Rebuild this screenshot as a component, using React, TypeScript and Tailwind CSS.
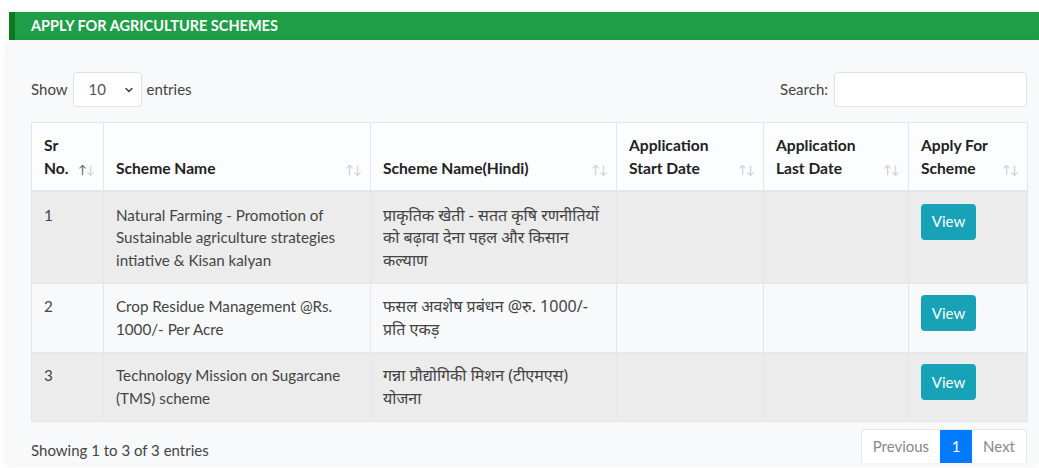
import React from "react";

const rows = [
  {
    sr: "1",
    name: "Natural Farming - Promotion of Sustainable agriculture strategies intiative & Kisan kalyan",
    hindi: "प्राकृतिक खेती - सतत कृषि रणनीतियों को बढ़ावा देना पहल और किसान कल्याण",
  },
  {
    sr: "2",
    name: "Crop Residue Management @Rs. 1000/- Per Acre",
    hindi: "फसल अवशेष प्रबंधन @रु. 1000/- प्रति एकड़",
  },
  {
    sr: "3",
    name: "Technology Mission on Sugarcane (TMS) scheme",
    hindi: "गन्ना प्रौद्योगिकी मिशन (टीएमएस) योजना",
  },
];

const SortIcon = ({ active }: { active?: boolean }) => (
  <span className="absolute right-[9px] bottom-[14px] flex text-[12px] leading-none tracking-[-1px] font-normal">
    <span className={active ? "text-[#555]" : "text-[#ccc]"}>↑</span>
    <span className="text-[#ccc]">↓</span>
  </span>
);

const headers = [
  { label: "Sr No.", w: "w-[72px]", active: true },
  { label: "Scheme Name", w: "w-[267px]" },
  { label: "Scheme Name(Hindi)", w: "w-[246px]" },
  { label: "Application Start Date", w: "w-[147px]" },
  { label: "Application Last Date", w: "w-[145px]" },
  { label: "Apply For Scheme", w: "w-[119px]" },
];

export default function App() {
  return (
    <div className="min-h-[468px] overflow-hidden bg-white pt-3 pl-[9px] font-['Lato','Liberation_Sans',sans-serif] text-[15px] text-[#212529]">
      <div className="flex h-[28px] items-center border-l-[6px] border-[#0b7a1f] bg-[#1e9e47] pl-[16px] text-[14.5px] font-bold text-white">
        APPLY FOR AGRICULTURE SCHEMES
      </div>

      <div className="h-[423px] overflow-hidden bg-[#f8f9fa] pl-[22px] pr-[12px] pt-[32px] shadow-[-3px_2px_8px_rgba(0,0,0,0.06)]">
        <div className="flex items-center justify-between">
          <div className="flex items-center gap-[5px] text-[#444]">
            <span>Show</span>
            <div className="flex h-[35px] w-[69px] items-center justify-between rounded-[4px] border border-[#dfe3e7] bg-white pl-[15px] pr-[7px] text-[#555]">
              <span>10</span>
              <svg width="10" height="10" viewBox="0 0 10 10" fill="none">
                <path d="M2 3.5L5 6.5L8 3.5" stroke="#444" strokeWidth="1.5" strokeLinecap="round" strokeLinejoin="round" />
              </svg>
            </div>
            <span>entries</span>
          </div>
          <div className="flex items-center gap-[6px] text-[#444]">
            <span>Search:</span>
            <div className="h-[35px] w-[193px] rounded-[4px] border border-[#dfe3e7] bg-white" />
          </div>
        </div>

        <table className="mt-[15px] w-[996px] table-fixed border-collapse">
          <thead>
            <tr className="bg-[#fcfdfe]">
              {headers.map((h) => (
                <th
                  key={h.label}
                  className={`${h.w} relative border border-b-2 border-[#e4e7ea] px-[12px] py-[11px] text-left align-bottom text-[15.6px] font-bold leading-[22.5px] text-[#222]`}
                >
                  <span className="block pr-[14px]">{h.label}</span>
                  <SortIcon active={h.active} />
                </th>
              ))}
            </tr>
          </thead>
          <tbody>
            {rows.map((r, i) => (
              <tr key={r.sr} className={i % 2 === 0 ? "bg-[#ececed]" : "bg-[#f8f9fa]"}>
                <td className="border border-[#e4e7ea] px-[12px] py-[11.5px] align-top text-[15.2px] leading-[22.5px] text-[#444]">{r.sr}</td>
                <td className="border border-[#e4e7ea] px-[12px] py-[11.5px] align-top text-[15.2px] leading-[22.5px] text-[#444]">{r.name}</td>
                <td className="border border-[#e4e7ea] px-[12px] py-[11.5px] align-top font-['Noto_Sans','Lato',sans-serif] text-[16px] leading-[22.5px] text-[#444]">
                  {r.hindi}
                </td>
                <td className="border border-[#e4e7ea]" />
                <td className="border border-[#e4e7ea]" />
                <td className="border border-[#e4e7ea] px-[12px] py-[11.5px] align-top">
                  <button className="h-[36px] w-[55px] rounded-[4px] bg-[#17a2b8] text-[15px] text-white">View</button>
                </td>
              </tr>
            ))}
          </tbody>
        </table>

        <div className="mt-[7px] flex items-start justify-between">
          <span className="mt-[10px] text-[#444]">Showing 1 to 3 of 3 entries</span>
          <div className="flex h-[36px] overflow-hidden rounded-[4px] border border-[#e4e7ea] bg-white">
            <span className="flex items-center px-[11px] text-[#888]">Previous</span>
            <span className="flex w-[32px] items-center justify-center bg-[#007bff] text-white">1</span>
            <span className="flex items-center px-[11px] text-[#888]">Next</span>
          </div>
        </div>
      </div>
    </div>
  );
}
